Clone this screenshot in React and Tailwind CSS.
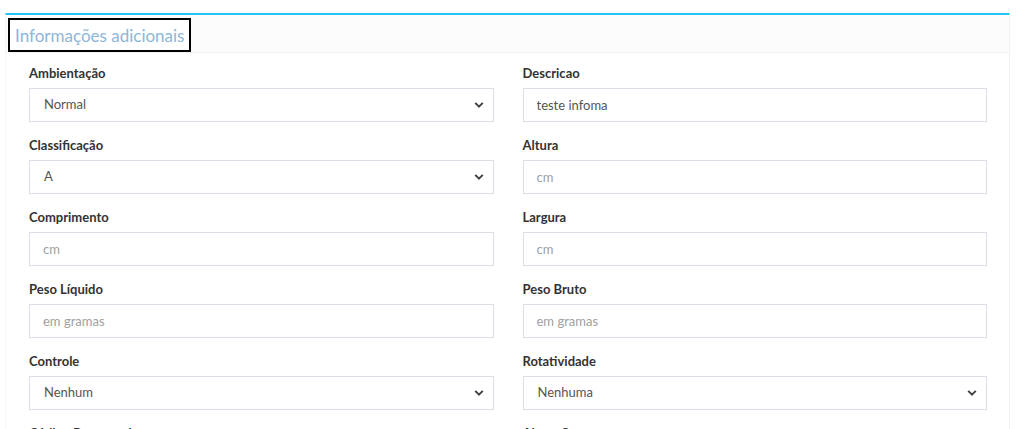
import { useState } from 'react'

function Chevron() {
  return (
    <svg width="10" height="7" viewBox="0 0 10 7" className="absolute right-[9px] top-1/2 -translate-y-1/2 pointer-events-none">
      <polyline points="1.2,1.4 5,5.2 8.8,1.4" fill="none" stroke="#444" strokeWidth="2" />
    </svg>
  )
}

function Field({ label, children }) {
  return (
    <div>
      <label className="block text-[13px] font-bold text-[#333] leading-[18px] mb-[6px]">{label}</label>
      {children}
    </div>
  )
}

function SelectBox({ value }) {
  return (
    <div className="relative h-[34px] border border-[#dcdde6] bg-white flex items-center pl-[14px] text-[13px] text-[#555]">
      {value}
      <Chevron />
    </div>
  )
}

function TextBox({ value, placeholder }) {
  const [v, setV] = useState(value || '')
  return (
    <input
      type="text"
      value={v}
      onChange={(e) => setV(e.target.value)}
      placeholder={placeholder}
      className="block w-full h-[34px] border border-[#dcdde6] bg-white px-[13px] text-[13px] text-[#555] placeholder:text-[#a0a0a0] outline-none"
    />
  )
}

export default function App() {
  return (
    <div className="w-[1024px] h-[429px] overflow-hidden bg-white pt-[13px] pl-[5px] pr-[14px]" style={{ fontFamily: 'Lato, "Open Sans", sans-serif' }}>
      <div className="border-t-2 border-[#26c4ee] border-r border-r-[#f2f2f2] border-l border-l-[#f6f6f6]">
        <div className="h-[38px] bg-[#fcfcfc] border-b border-[#f1f1f1] flex items-end pl-[2px]">
          <div className="h-[34px] border-2 border-black bg-white px-[5px] flex items-center text-[17px] text-[#8cb6da] leading-none">
            Informações adicionais
          </div>
        </div>
        <div className="grid grid-cols-2 gap-x-[29px] gap-y-[14px] pl-[23px] pr-[22px] pt-[11px] pb-4">
          <Field label="Ambientação"><SelectBox value="Normal" /></Field>
          <Field label="Descricao"><TextBox value="teste infoma" /></Field>
          <Field label="Classificação"><SelectBox value="A" /></Field>
          <Field label="Altura"><TextBox placeholder="cm" /></Field>
          <Field label="Comprimento"><TextBox placeholder="cm" /></Field>
          <Field label="Largura"><TextBox placeholder="cm" /></Field>
          <Field label="Peso Líquido"><TextBox placeholder="em gramas" /></Field>
          <Field label="Peso Bruto"><TextBox placeholder="em gramas" /></Field>
          <Field label="Controle"><SelectBox value="Nenhum" /></Field>
          <Field label="Rotatividade"><SelectBox value="Nenhuma" /></Field>
          <Field label="Código Processador"><TextBox /></Field>
          <Field label="Altura Sup."><TextBox /></Field>
        </div>
      </div>
    </div>
  )
}
